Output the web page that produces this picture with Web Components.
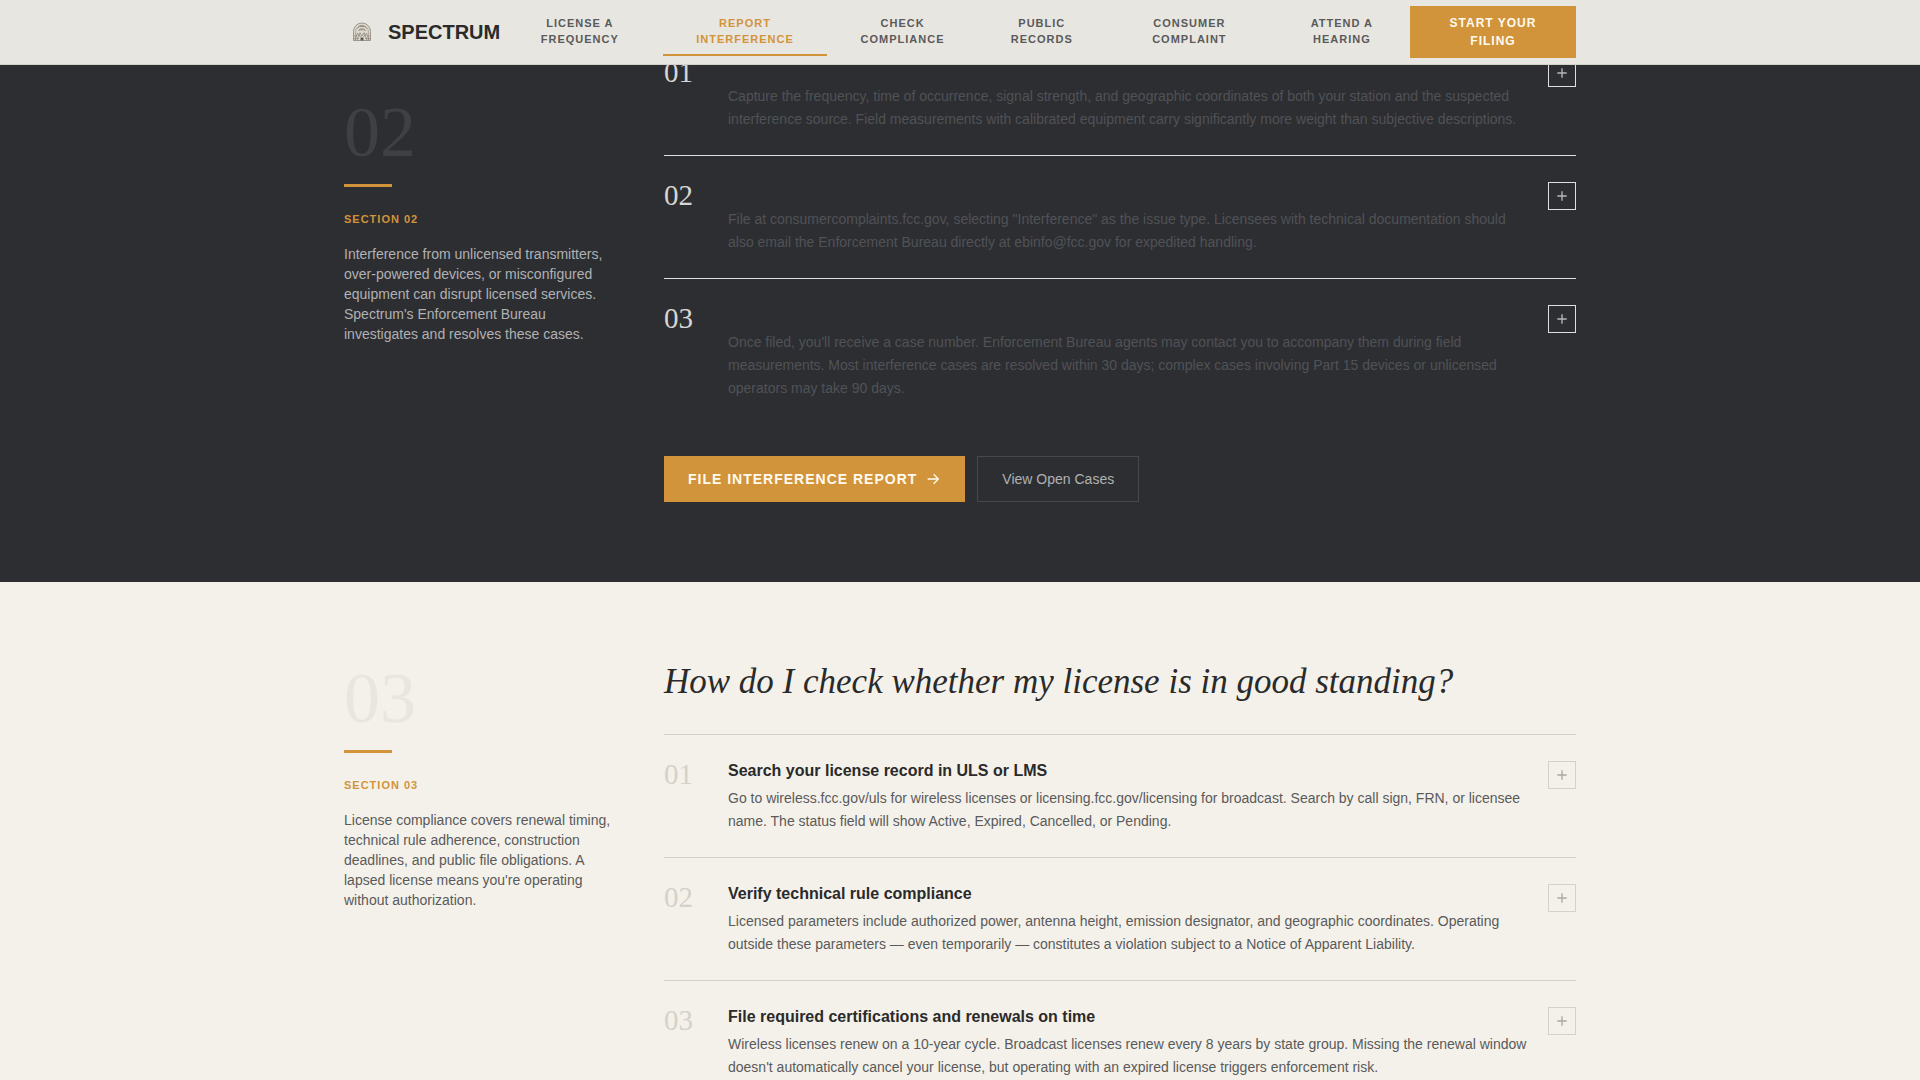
<!DOCTYPE html>
<html lang="en">
<head>
<meta charset="utf-8">
<meta name="viewport" content="width=device-width, initial-scale=1">
<title>Spectrum</title>
<style>
    :root {
        --ink: #2a2a2a;
        --slate: #2d2e32;
        --paper: #f4f1ea;
        --stone: #e8e6e1;
        --rule: #d4d1ca;
        --amber: #d2943a;
        --muted: #5a5a5a;
        --serif: "Liberation Serif", "Times New Roman", serif;
    }
    body {
        margin: 0;
        background: var(--paper);
        color: var(--ink);
        font: 14px/20px "Liberation Sans", Arial, sans-serif;
    }
    p {
        margin: 0;
    }
</style>
</head>
<body>
<site-header></site-header>
<main>
    <guide-section number="02" theme="dark">
        <p slot="lead">Interference from unlicensed transmitters, over-powered devices, or misconfigured equipment can disrupt licensed services. Spectrum's Enforcement Bureau investigates and resolves these cases.</p>
        <guide-step number="01">Capture the frequency, time of occurrence, signal strength, and geographic coordinates of both your station and the suspected interference source. Field measurements with calibrated equipment carry significantly more weight than subjective descriptions.</guide-step>
        <guide-step number="02">File at consumercomplaints.fcc.gov, selecting "Interference" as the issue type. Licensees with technical documentation should also email the Enforcement Bureau directly at ebinfo@fcc.gov for expedited handling.</guide-step>
        <guide-step number="03">Once filed, you'll receive a case number. Enforcement Bureau agents may contact you to accompany them during field measurements. Most interference cases are resolved within 30 days; complex cases involving Part 15 devices or unlicensed operators may take 90 days.</guide-step>
        <action-link slot="actions" kind="primary">File Interference Report</action-link>
        <action-link slot="actions" kind="ghost">View Open Cases</action-link>
    </guide-section>
    <guide-section number="03">
        <p slot="lead">License compliance covers renewal timing, technical rule adherence, construction deadlines, and public file obligations. A lapsed license means you're operating without authorization.</p>
        <section-title slot="title">How do I check whether my license is in good standing?</section-title>
        <guide-step number="01" heading="Search your license record in ULS or LMS">Go to wireless.fcc.gov/uls for wireless licenses or licensing.fcc.gov/licensing for broadcast. Search by call sign, FRN, or licensee name. The status field will show Active, Expired, Cancelled, or Pending.</guide-step>
        <guide-step number="02" heading="Verify technical rule compliance">Licensed parameters include authorized power, antenna height, emission designator, and geographic coordinates. Operating outside these parameters — even temporarily — constitutes a violation subject to a Notice of Apparent Liability.</guide-step>
        <guide-step number="03" heading="File required certifications and renewals on time">Wireless licenses renew on a 10-year cycle. Broadcast licenses renew every 8 years by state group. Missing the renewal window doesn't automatically cancel your license, but operating with an expired license triggers enforcement risk.</guide-step>
    </guide-section>
</main>

<script>
class SiteHeader extends HTMLElement {
    constructor() {
        super();
        this.shadow = this.attachShadow({ mode: "open" });
    }
    connectedCallback() {
        this.shadow.innerHTML = `
        <style>
        :host{
            display:block;
            position:fixed;
            top:0;
            left:0;
            right:0;
            z-index:10;
            background:var(--stone);
            border-bottom:1px solid var(--rule);
        }
        .bar{
            box-sizing:border-box;
            max-width:1280px;
            height:64px;
            margin:0 auto;
            padding:0 24px;
            display:flex;
            align-items:center;
            justify-content:space-between;
        }
        a{
            text-decoration:none;
        }
        .logo{
            flex:none;
            display:flex;
            align-items:center;
            gap:8px;
            font-size:20px;
            font-weight:bold;
            line-height:24px;
            color:var(--ink);
        }
        nav{
            display:flex;
            align-items:center;
            gap:4px;
        }
        nav a{
            padding:7px 12px;
            border-bottom:2px solid transparent;
            font-size:11px;
            font-weight:bold;
            line-height:16px;
            letter-spacing:1px;
            text-align:center;
            text-transform:uppercase;
            color:var(--muted);
        }
        nav a[aria-current]{
            color:var(--amber);
            border-color:var(--amber);
        }
        .cta{
            padding:8px 20px;
            background:var(--amber);
            color:#fffaf0;
            font-size:12px;
            font-weight:bold;
            line-height:18px;
            letter-spacing:1px;
            text-align:center;
            text-transform:uppercase;
        }
        </style>
        <div class="bar">
            <a class="logo" href="#">
                <svg width="36" height="36" viewBox="0 0 36 36" fill="none" stroke="#8a8379" stroke-width="0.8" aria-hidden="true">
                    <path d="M9.500 26.500V17.500a8.500 8.500 0 0 1 17 0v9z" fill="#ddd8ce"/>
                    <path d="M11.500 26V18a6.500 6.500 0 0 1 13 0v8" stroke="#aaa298"/>
                    <path d="M13.500 14.500a5 5 0 0 1 9 0M14.500 17a3.800 3.800 0 0 1 7 0M15.500 12.500h5M15 15.800h6"/>
                    <path d="M11 26l2.500-7M13 26l3-7.500M25 26l-2.500-7M23 26l-3-7.500M13.500 19.500l4.500 5 4.500-5M16 19l2 3 2-3"/>
                    <path d="M10 24.500h5M21 24.500h5M10 22h3M23 22h3" stroke="#999188"/>
                    <circle cx="18" cy="25" r="1.600" fill="#5d5852" stroke="none"/>
                </svg>
                <span>SPECTRUM</span>
            </a>
            <nav aria-label="Main">
                <a href="#">License a Frequency</a>
                <a href="#" aria-current="true">Report Interference</a>
                <a href="#">Check Compliance</a>
                <a href="#">Public Records</a>
                <a href="#">Consumer Complaint</a>
                <a href="#">Attend a Hearing</a>
            </nav>
            <a class="cta" href="#">Start Your Filing</a>
        </div>
        `;
    }
}

window.customElements.define("site-header", SiteHeader);

class GuideSection extends HTMLElement {
    constructor() {
        super();
        this.shadow = this.attachShadow({ mode: "open" });
    }
    connectedCallback() {
        const number = this.getAttribute("number");
        this.shadow.innerHTML = `
        <style>
        :host{
            --ghost:#e8e6e0;
            --lead:#5a5a5a;
            --step-text:#5a5a5a;
            --step-number:#d4d1ca;
            --step-rule:#d4d1ca;
            --plus:#aaa8a4;
            display:block;
            padding:80px 0;
        }
        :host([theme="dark"]){
            --ghost:#3e4044;
            --lead:#b0b1b3;
            --step-text:#505256;
            --step-number:#d8d6d2;
            --step-rule:#e0dfdd;
            --plus:#b8b8b8;
            padding-top:32px;
            background:var(--slate);
        }
        .wrap{
            box-sizing:border-box;
            max-width:1280px;
            margin:0 auto;
            padding:0 24px;
            display:grid;
            grid-template-columns:270px minmax(0, 1fr);
            gap:50px;
        }
        aside{
            position:sticky;
            top:96px;
            align-self:start;
            color:var(--lead);
        }
        .number{
            font:72px/72px var(--serif);
            color:var(--ghost);
        }
        .accent{
            width:48px;
            height:3px;
            margin:16px 0 24px;
            background:var(--amber);
        }
        .label{
            margin-bottom:17px;
            font-size:11px;
            font-weight:bold;
            line-height:16px;
            letter-spacing:1px;
            text-transform:uppercase;
            color:var(--amber);
        }
        .steps{
            border-top:1px solid var(--step-rule);
        }
        .actions{
            display:flex;
            flex-wrap:wrap;
            gap:12px;
            margin-top:32px;
        }
        </style>
        <section class="wrap">
            <aside>
                <div class="number">${number}</div>
                <div class="accent"></div>
                <div class="label">Section ${number}</div>
                <slot name="lead"></slot>
            </aside>
            <div>
                <slot name="title"></slot>
                <div class="steps"><slot></slot></div>
                <div class="actions"><slot name="actions"></slot></div>
            </div>
        </section>
        `;
    }
}

window.customElements.define("guide-section", GuideSection);

class SectionTitle extends HTMLElement {
    constructor() {
        super();
        this.shadow = this.attachShadow({ mode: "open" });
    }
    connectedCallback() {
        this.shadow.innerHTML = `
        <style>
        :host{
            display:block;
            margin-bottom:32px;
        }
        h2{
            margin:0;
            font:italic 35px/40px var(--serif);
        }
        </style>
        <h2><slot></slot></h2>
        `;
    }
}

window.customElements.define("section-title", SectionTitle);

class GuideStep extends HTMLElement {
    constructor() {
        super();
        this.shadow = this.attachShadow({ mode: "open" });
    }
    connectedCallback() {
        const number = this.getAttribute("number");
        const heading = this.getAttribute("heading") || "";
        this.shadow.innerHTML = `
        <style>
        :host{
            display:grid;
            grid-template-columns:48px minmax(0, 1fr) 28px;
            column-gap:16px;
            align-items:start;
            padding:26px 0 24px;
            border-bottom:1px solid var(--step-rule);
        }
        :host(:last-of-type){
            border-bottom:0;
        }
        .number{
            font:29px/26px var(--serif);
            color:var(--step-number);
        }
        .heading{
            min-height:20px;
            margin-bottom:6px;
            font-size:16px;
            font-weight:bold;
        }
        p{
            margin:0;
            line-height:23px;
            color:var(--step-text);
        }
        button{
            box-sizing:border-box;
            width:28px;
            height:28px;
            padding:0;
            display:grid;
            place-items:center;
            background:none;
            border:1px solid var(--step-rule);
            color:var(--plus);
            cursor:pointer;
        }
        </style>
        <div class="number">${number}</div>
        <div>
            <div class="heading" ${heading ? 'role="heading" aria-level="3"' : ""}>${heading}</div>
            <p><slot></slot></p>
        </div>
        <button type="button" aria-label="Expand step ${number}">
            <svg width="16" height="16" viewBox="0 0 24 24" fill="none" stroke="currentColor" stroke-width="2"><path d="M12 5v14M5 12h14"/></svg>
        </button>
        `;
    }
}

window.customElements.define("guide-step", GuideStep);

class ActionLink extends HTMLElement {
    constructor() {
        super();
        this.shadow = this.attachShadow({ mode: "open" });
    }
    connectedCallback() {
        const arrow = `<svg width="16" height="16" viewBox="0 0 24 24" fill="none" stroke="currentColor" stroke-width="2" aria-hidden="true"><path d="M4 12h16M13 5l7 7-7 7"/></svg>`;
        this.shadow.innerHTML = `
        <style>
        :host{
            display:block;
        }
        a{
            box-sizing:border-box;
            height:46px;
            padding:0 24px;
            display:flex;
            align-items:center;
            gap:8px;
            text-decoration:none;
            color:#b0b1b3;
        }
        :host([kind="primary"]) a{
            background:var(--amber);
            color:#fffaf0;
            font-weight:bold;
            letter-spacing:1px;
            text-transform:uppercase;
        }
        :host([kind="ghost"]) a{
            border:1px solid #46484c;
        }
        </style>
        <a href="#"><slot></slot>${this.getAttribute("kind") === "primary" ? arrow : ""}</a>
        `;
    }
}

window.customElements.define("action-link", ActionLink);
</script>
</body>
</html>
